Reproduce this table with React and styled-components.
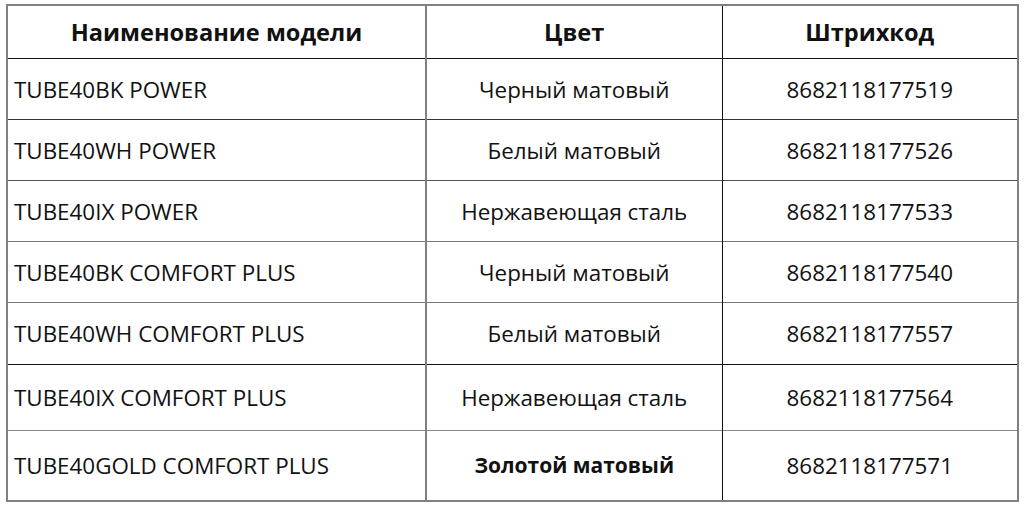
import React from "react";
import styled, { createGlobalStyle } from "styled-components";

const rows = [
  { model: "TUBE40BK POWER", color: "Черный матовый", code: "8682118177519", h: 61, line: "#111" },
  { model: "TUBE40WH POWER", color: "Белый матовый", code: "8682118177526", h: 61, line: "#333" },
  { model: "TUBE40IX POWER", color: "Нержавеющая сталь", code: "8682118177533", h: 61, line: "#555" },
  { model: "TUBE40BK COMFORT PLUS", color: "Черный матовый", code: "8682118177540", h: 61, line: "#777" },
  { model: "TUBE40WH COMFORT PLUS", color: "Белый матовый", code: "8682118177557", h: 62, line: "#777" },
  { model: "TUBE40IX COMFORT PLUS", color: "Нержавеющая сталь", code: "8682118177564", h: 66, line: "#111" },
  { model: "TUBE40GOLD COMFORT PLUS", color: "Золотой матовый", code: "8682118177571", h: 70, line: "#888", bold: true },
];

const GlobalStyle = createGlobalStyle`
  html, body {
    margin: 0;
    padding: 0;
    background: #fff;
  }
  body {
    font-family: "Open Sans", "Liberation Sans", sans-serif;
    color: #111;
  }
`;

const Page = styled.div`
  width: 1024px;
  height: 506px;
  padding: 4px 0 0 6px;
  box-sizing: border-box;
`;

const Table = styled.table`
  width: 1011px;
  border-collapse: collapse;
  table-layout: fixed;
  border: 2px solid #808080;
`;

const HeadCell = styled.th`
  height: 52px;
  padding: 0;
  font-size: 23.6px;
  font-weight: 700;
  text-align: center;
  vertical-align: middle;
  border-bottom: 1.5px solid #111;
  border-right: ${({ $border }) => $border || "none"};
`;

const Row = styled.tr`
  height: ${({ $h }) => $h}px;
  td {
    border-top: 1.5px solid ${({ $line }) => $line};
  }
`;

const Cell = styled.td`
  padding: 0;
  padding-left: ${({ $left }) => ($left ? "6px" : "0")};
  font-size: ${({ $bold }) => ($bold ? "21px" : "22.4px")};
  font-weight: ${({ $bold }) => ($bold ? 700 : 400)};
  text-align: ${({ $left }) => ($left ? "left" : "center")};
  vertical-align: middle;
  white-space: nowrap;
  border-right: ${({ $border }) => $border || "none"};
`;

const GRAY = "2px solid #808080";
const DARK = "1.5px solid #111";

export default function App() {
  return (
    <>
      <GlobalStyle />
      <Page>
        <Table>
          <colgroup>
            <col style={{ width: 419 }} />
            <col style={{ width: 296 }} />
            <col style={{ width: 296 }} />
          </colgroup>
          <thead>
            <tr>
              <HeadCell $border={GRAY}>Наименование модели</HeadCell>
              <HeadCell $border={DARK}>Цвет</HeadCell>
              <HeadCell>Штрихкод</HeadCell>
            </tr>
          </thead>
          <tbody>
            {rows.map((r) => (
              <Row key={r.code} $h={r.h} $line={r.line}>
                <Cell $left $border={GRAY}>{r.model}</Cell>
                <Cell $bold={r.bold} $border={DARK}>{r.color}</Cell>
                <Cell>{r.code}</Cell>
              </Row>
            ))}
          </tbody>
        </Table>
      </Page>
    </>
  );
}
